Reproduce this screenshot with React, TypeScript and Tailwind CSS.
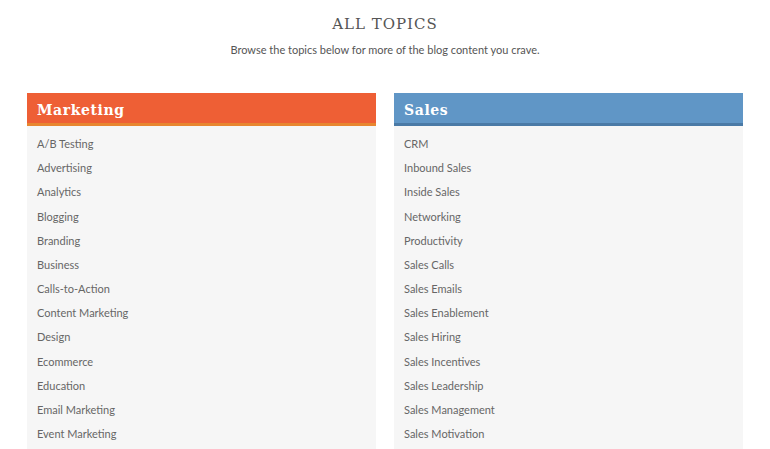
import React from 'react';

const marketing = [
  'A/B Testing',
  'Advertising',
  'Analytics',
  'Blogging',
  'Branding',
  'Business',
  'Calls-to-Action',
  'Content Marketing',
  'Design',
  'Ecommerce',
  'Education',
  'Email Marketing',
  'Event Marketing',
];

const sales = [
  'CRM',
  'Inbound Sales',
  'Inside Sales',
  'Networking',
  'Productivity',
  'Sales Calls',
  'Sales Emails',
  'Sales Enablement',
  'Sales Hiring',
  'Sales Incentives',
  'Sales Leadership',
  'Sales Management',
  'Sales Motivation',
];

const TopicColumn: React.FC<{ title: string; items: string[]; headerClass: string }> = ({ title, items, headerClass }) => (
  <div className="bg-[#f6f6f6]">
    <div className={`h-[33px] flex items-center px-[10px] pt-[4px] border-b-[3px] ${headerClass}`}>
      <h2 className="text-white text-[14px] font-bold tracking-[0.6px] font-['DejaVu_Serif',serif]">{title}</h2>
    </div>
    <ul className="pt-[6px] pb-4 px-[10px]">
      {items.map((item) => (
        <li key={item} className="text-[11px] leading-[24.17px] text-[#666]">
          {item}
        </li>
      ))}
    </ul>
  </div>
);

export default function App() {
  return (
    <div className="bg-white w-[770px] h-[449px] overflow-hidden font-['Lato','Open_Sans',sans-serif]">
      <div className="pt-[14px] text-center">
        <h1 className="text-[15px] leading-[20px] tracking-[1px] text-[#555] font-['DejaVu_Serif',serif]">ALL TOPICS</h1>
        <p className="mt-[9px] text-[11px] leading-[14px] text-[#555]">
          Browse the topics below for more of the blog content you crave.
        </p>
      </div>
      <div className="mx-auto mt-[36px] w-[716px] grid grid-cols-2 gap-[18px]">
        <TopicColumn title="Marketing" items={marketing} headerClass="bg-[#ee5f35] border-[#e8862f]" />
        <TopicColumn title="Sales" items={sales} headerClass="bg-[#6096c6] border-[#4a7aa6]" />
      </div>
    </div>
  );
}
